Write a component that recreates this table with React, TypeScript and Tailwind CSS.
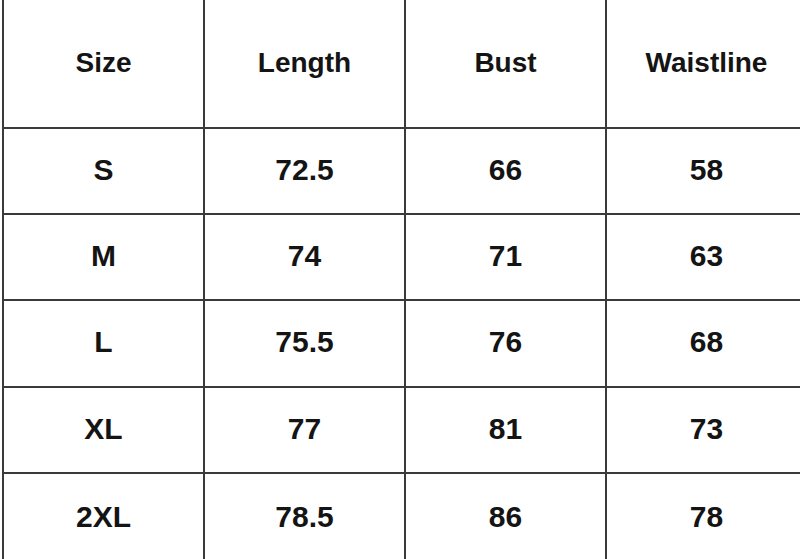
const headers = ['Size', 'Length', 'Bust', 'Waistline']

const rows = [
  { size: 'S', length: '72.5', bust: '66', waist: '58', h: 'h-[86px]' },
  { size: 'M', length: '74', bust: '71', waist: '63', h: 'h-[86px]' },
  { size: 'L', length: '75.5', bust: '76', waist: '68', h: 'h-[87px]' },
  { size: 'XL', length: '77', bust: '81', waist: '73', h: 'h-[86px]' },
  { size: '2XL', length: '78.5', bust: '86', waist: '78', h: 'h-[90px]' },
]

export default function App() {
  return (
    <div className="w-[800px] h-[559px] overflow-hidden bg-white">
      <div
        className="ml-[2px] w-[806px] grid grid-cols-[201px_201px_201px_201px] text-[#141414]"
        style={{ fontFamily: '"Liberation Sans", Arial, sans-serif' }}
      >
        {headers.map((h) => (
          <div
            key={h}
            className="h-[129px] border-l-2 border-b-2 border-[#3a3a3a] flex items-center justify-center pb-[2px] text-[28px] font-bold"
          >
            {h}
          </div>
        ))}
        {rows.map((r) =>
          [r.size, r.length, r.bust, r.waist].map((v, i) => (
            <div
              key={r.size + i}
              className={`${r.h} border-l-2 border-b-2 border-[#3a3a3a] flex items-center justify-center pb-[4px] text-[30px] font-bold`}
            >
              {v}
            </div>
          ))
        )}
      </div>
    </div>
  )
}
